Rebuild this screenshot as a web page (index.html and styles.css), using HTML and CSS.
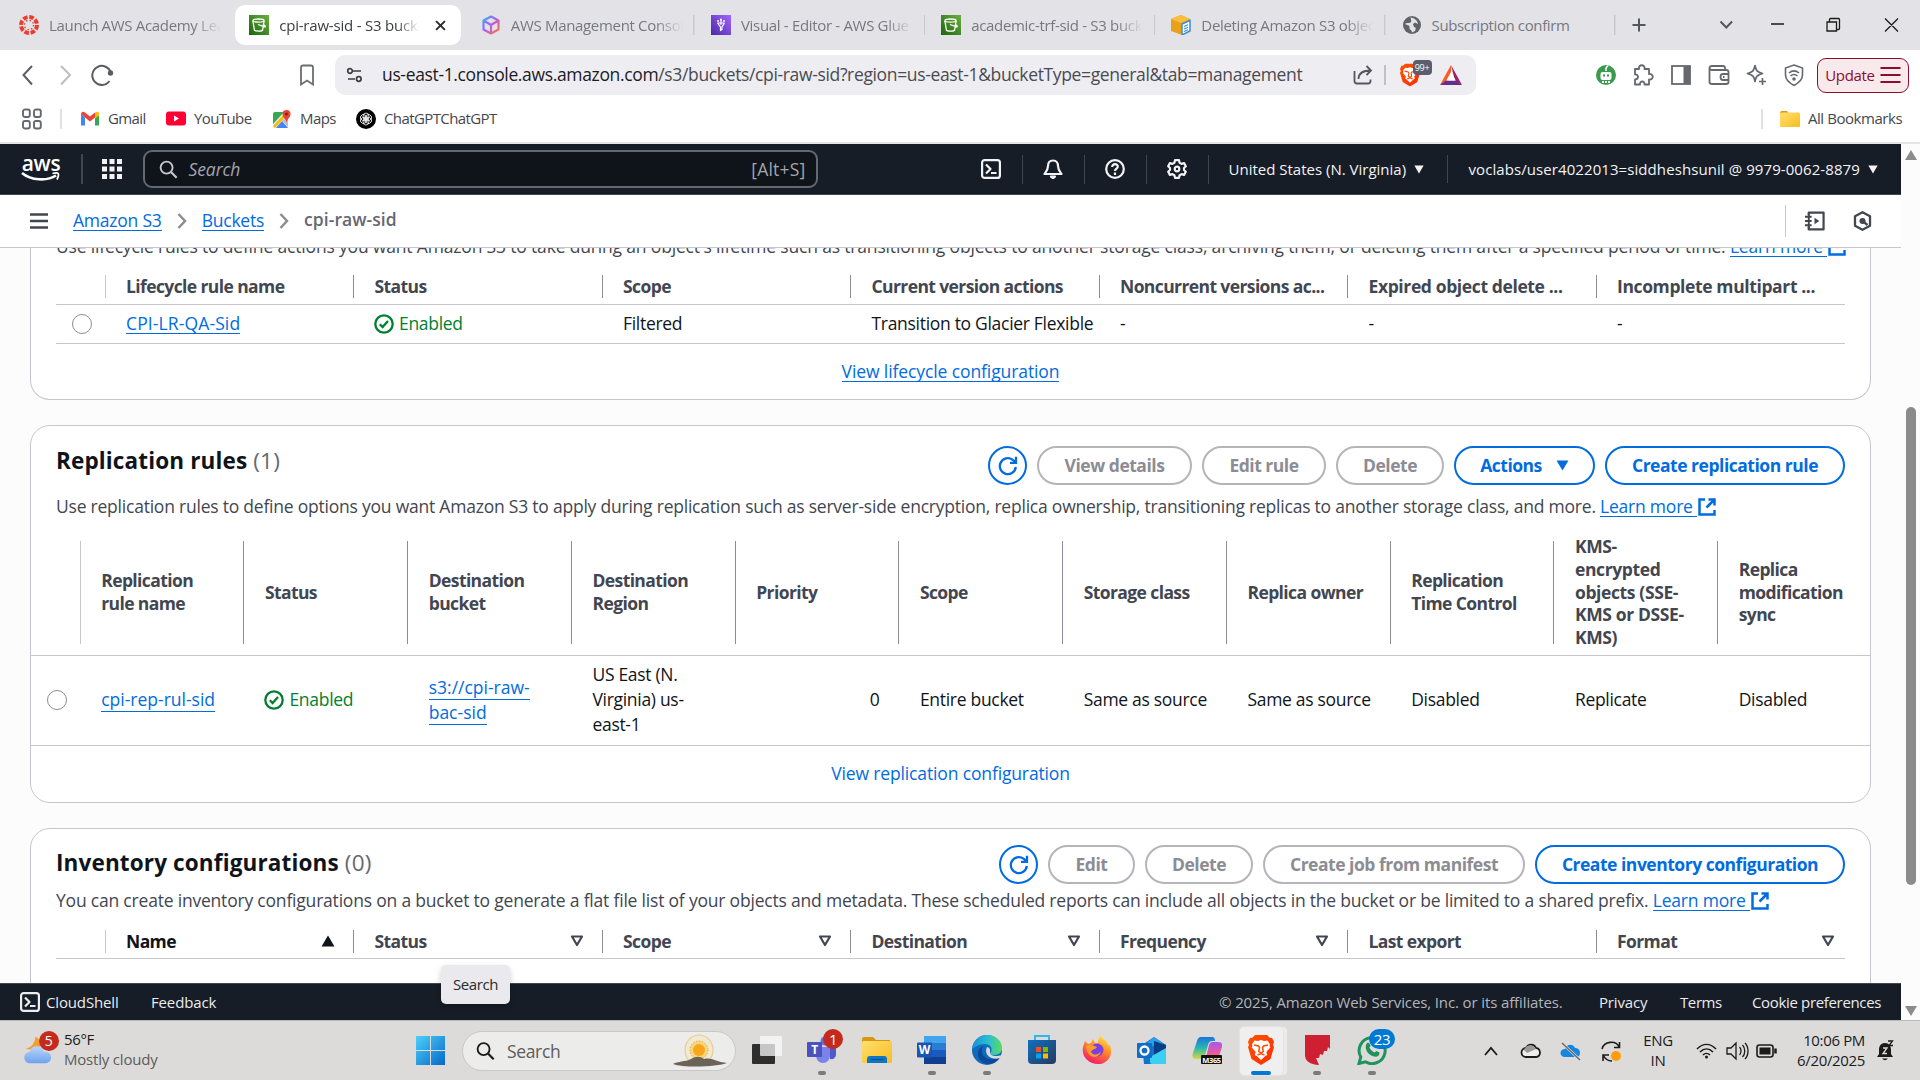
FILE: index.html
```html
<!DOCTYPE html>
<html lang="en">
<head>
<meta charset="utf-8">
<title>cpi-raw-sid - S3 bucket</title>
<link rel="stylesheet" href="styles.css">
</head>
<body>
<svg width="0" height="0" class="defs">
  <defs>
    <linearGradient id="gGreen" x1="0" y1="1" x2="1" y2="0"><stop offset="0" stop-color="#1b660f"/><stop offset="1" stop-color="#6cae3e"/></linearGradient>
    <linearGradient id="gPurple" x1="0" y1="1" x2="1" y2="0"><stop offset="0" stop-color="#4d27a8"/><stop offset="1" stop-color="#a166ff"/></linearGradient>
    <linearGradient id="gCube" x1="0" y1="0" x2="1" y2="1"><stop offset="0" stop-color="#2bb5f5"/><stop offset=".45" stop-color="#b05cf0"/><stop offset="1" stop-color="#ff7a3c"/></linearGradient>
    <linearGradient id="gWin" x1="0" y1="0" x2="1" y2="1"><stop offset="0" stop-color="#4fd0fb"/><stop offset="1" stop-color="#0468c8"/></linearGradient>
    <linearGradient id="gFolder" x1="0" y1="0" x2="1" y2="1"><stop offset="0" stop-color="#ffdf70"/><stop offset="1" stop-color="#f8bd1e"/></linearGradient>
    <linearGradient id="gCloud" x1="0" y1="0" x2="0" y2="1"><stop offset="0" stop-color="#b9d6fa"/><stop offset="1" stop-color="#6ea2ee"/></linearGradient>
    <linearGradient id="gEdge" x1="0" y1="0" x2="1" y2="0"><stop offset="0" stop-color="#1b8fd8"/><stop offset=".55" stop-color="#2bbfd0"/><stop offset="1" stop-color="#5fdc5c"/></linearGradient>
    <linearGradient id="gStore" x1="0" y1="0" x2="1" y2="1"><stop offset="0" stop-color="#0f71c0"/><stop offset="1" stop-color="#26395f"/></linearGradient>
    <linearGradient id="gFire" x1=".8" y1="0" x2=".3" y2="1"><stop offset="0" stop-color="#fff04a"/><stop offset=".45" stop-color="#ff8a2a"/><stop offset="1" stop-color="#f5156c"/></linearGradient>
    <linearGradient id="gBrave" x1="0" y1="0" x2="1" y2="1"><stop offset="0" stop-color="#ff5500"/><stop offset="1" stop-color="#ff2a00"/></linearGradient>
    <linearGradient id="gM1" x1="0" y1="0" x2="0" y2="1"><stop offset="0" stop-color="#1a74e0"/><stop offset=".5" stop-color="#29b7b0"/><stop offset="1" stop-color="#d8d83c"/></linearGradient>
    <linearGradient id="gM2" x1="0" y1="0" x2="0" y2="1"><stop offset="0" stop-color="#a558f0"/><stop offset=".6" stop-color="#ee5a9a"/><stop offset="1" stop-color="#ff8f55"/></linearGradient>
    <symbol id="s3" viewBox="0 0 20 20"><rect width="20" height="20" fill="url(#gGreen)"/><g fill="none" stroke="#fff" stroke-width="1.3"><ellipse cx="9.5" cy="5.6" rx="5.6" ry="1.6"/><path d="M3.9 5.8 5.4 15c.3 1.4 7.9 1.4 8.2 0l1.500-9.2M9 9.500l6.500 2.300c1.200.2 1-1-.7-1.900"/></g></symbol>
    <symbol id="brave" viewBox="0 0 26 30"><path d="M7 0h12l3 3 2-.3 2 4.300-1 3 1 2-3.500 12L13 30 3.500 24 0 12l1-2-1-3 2-4.300L4 3z" fill="url(#gBrave)"/><path d="m13 5 3 1 3.500-.5 2.500 4-.5 1.500.8 1.500-4 4.500 1 3-2 1-4.300 4-4.300-4-2-1 1-3-4-4.500.8-1.500L4 9.500l2.500-4L10 6z" fill="#fff"/><path d="m6 10 4.500 1 1 1.500-.7 4L13 18l2.200-1.500-.7-4 1-1.500 4.500-1M9.500 20l3.500-1.500 3.500 1.500" fill="none" stroke="#ff4a00" stroke-width="1.500"/></symbol>
    <symbol id="shell" viewBox="0 0 20 20"><g fill="none" stroke="currentColor" stroke-width="2.200" stroke-linejoin="round"><rect x="1.100" y="1.100" width="17.800" height="17.800" rx="2.500"/><path d="m5 5.500 4.500 4.500L5 14.500M10 14h5.500"/></g></symbol>
    <symbol id="mag" viewBox="0 0 20 20"><circle cx="8" cy="8" r="6.300" fill="none" stroke="currentColor" stroke-width="2"/><path d="m12.600 12.600 6 6" stroke="currentColor" stroke-width="2.300"/></symbol>
    <symbol id="ext" viewBox="0 0 18 18"><path d="M7 1.500H1.500v15h15V12M10.500 1.500h6v6M16 2 8.500 9.500" fill="none" stroke="currentColor" stroke-width="2.500"/></symbol>
    <symbol id="ok" viewBox="0 0 20 20"><circle cx="10" cy="10" r="8.700" fill="none" stroke="currentColor" stroke-width="2.300"/><path d="m5.800 10.200 2.800 2.800 5.400-6" fill="none" stroke="currentColor" stroke-width="2.300"/></symbol>
    <symbol id="refresh" viewBox="0 0 20 20"><path d="M17.800 11A8 8 0 1 1 14.500 3.600l2.800 2.200M18 .8v6h-6" fill="none" stroke="currentColor" stroke-width="2.300"/></symbol>
    <symbol id="down" viewBox="0 0 14 12"><path d="M.5.5h13L7 11.500z" fill="currentColor"/></symbol>
    <symbol id="sort" viewBox="0 0 14 12"><path d="M2 1.500h10L7 10z" fill="none" stroke="currentColor" stroke-width="2.200" stroke-linejoin="round"/></symbol>
    <symbol id="up" viewBox="0 0 14 12"><path d="M7 .5 13.500 11.500H.5z" fill="currentColor"/></symbol>
  </defs>
</svg>

<div class="tabs">
  <div class="tab"><svg class="fav" viewBox="0 0 20 20"><circle cx="10" cy="10" r="8" fill="none" stroke="#e83e30" stroke-width="4" stroke-dasharray="4.600 1.683"/><circle cx="10" cy="10" r="4.600" fill="none" stroke="#e83e30" stroke-width="1.400" stroke-dasharray="1.400 2.213"/></svg><span class="ttl">Launch AWS Academy Learner</span></div>
  <div class="tab on"><svg class="fav"><use href="#s3"/></svg><span class="ttl">cpi-raw-sid - S3 bucket</span><svg class="cls" viewBox="0 0 10 10"><path d="m1 1 8 8M9 1 1 9" stroke="#2c2d31" stroke-width="1.800"/></svg></div>
  <div class="tab sep"><svg class="fav" viewBox="0 0 20 20"><path d="m10 1.500 7.500 4v9L10 18.500l-7.500-4v-9zM2.500 5.500 10 10l7.500-4.500M10 10v8.500" fill="none" stroke="url(#gCube)" stroke-width="2.200" stroke-linejoin="round"/></svg><span class="ttl">AWS Management Console</span></div>
  <div class="tab sep"><svg class="fav" viewBox="0 0 20 20"><rect width="20" height="20" fill="url(#gPurple)"/><path d="m6.500 8 3 4v3.500l1.500-1V12l2.500-4M6.500 8h7M10 5v5" fill="none" stroke="#fff" stroke-width="1.200"/><g fill="#fff"><circle cx="7" cy="6" r="1"/><circle cx="10" cy="4.500" r="1"/><circle cx="13" cy="6" r="1"/></g></svg><span class="ttl">Visual - Editor - AWS Glue Studio</span></div>
  <div class="tab sep"><svg class="fav"><use href="#s3"/></svg><span class="ttl">academic-trf-sid - S3 bucket</span></div>
  <div class="tab sep"><svg class="fav" viewBox="0 0 20 20"><path d="M0 4 10 0l9 4v4l-8 3v9L0 16z" fill="#eba01b"/><path d="M0 4 10 0l9 4-9 4z" fill="#f9bf3c"/><path d="m11 9 8-3.500V16l-8 4z" fill="#fff" stroke="#3d8fd1" stroke-width="1.500"/><path d="m13 11.500 4-1.800M13 14l4-1.800M13 16.500l4-1.800" stroke="#3d8fd1" stroke-width="1.200"/></svg><span class="ttl">Deleting Amazon S3 objects</span></div>
  <div class="tab sep"><svg class="fav" viewBox="0 0 20 20"><circle cx="10" cy="10" r="9" fill="#5f6368"/><path d="M8.500 2.500c4 .5 7 3 7.500 6.500l-3-1.500-2 1.500 1 3c2 0 2 2 1 4l-3 1.500c0-2-1-2.500-2.500-3.500V11L3 9c1-1.500 4-.5 5.500-1.500s.5-2.500 0-5z" fill="#e3e2e7"/></svg><span class="ttl nofade">Subscription confirm</span></div>
  <svg class="winctl" viewBox="0 0 304 50" fill="none" stroke="#55565c" stroke-width="2"><path d="M16.500 25h13M23 18.500v13"/><path d="m104.500 21.500 5.800 6 5.800-6" /><g stroke="#1b1b1b" stroke-width="1.300"><path d="M155 24h13M211 22h9.500v9h-9.500zM213.500 22v-2.500c0-.6.4-1 1-1h8c.6 0 1 .4 1 1v9c0 .6-.4 1-1 1h-2M269 18.500l13 13M282 18.500l-13 13"/></g></svg>
</div>

<div class="toolbar">
  <svg class="nav" viewBox="0 0 120 50" fill="none" stroke="#5b5d63" stroke-width="2"><path d="M32 16 23.500 25l8.500 9.500"/><path d="m61 16 9 9-9 9.500" stroke="#bdbec3"/><path d="M111 23a9.500 9.500 0 1 0-1.500 8"/><circle cx="110.500" cy="23" r="2.700" fill="#5b5d63" stroke="none"/></svg>
  <svg class="bmk" viewBox="0 0 16 22"><path d="M2 20.500V3.500Q2 1.500 4 1.500h8q2 0 2 2v17l-6-4z" fill="none" stroke="#6b6d73" stroke-width="1.800"/></svg>
  <div class="omni">
    <svg class="tune" viewBox="0 0 16 16" fill="none" stroke="#3d3e43" stroke-width="1.700"><circle cx="3.500" cy="4" r="2.300"/><path d="M6.500 4h8M1.500 12h7"/><circle cx="12.300" cy="12" r="2.300"/></svg>
    <span class="url"><b>us-east-1.console.aws.amazon.com</b>/s3/buckets/cpi-raw-sid?region=us-east-1&amp;bucketType=general&amp;tab=management</span>
    <svg class="share" viewBox="0 0 20 20" fill="none" stroke="#55575d" stroke-width="1.800"><path d="M1.500 6v10q0 2.500 2.500 2.500h11q2.500 0 2.500-2.500v-1.500M5.500 14c0-6 5-8.500 12.500-8.500M13.500 1 18 5.500 13.500 10"/></svg>
    <i class="osep"></i>
    <span class="shield"><svg viewBox="0 0 26 30"><use href="#brave"/></svg><em>99+</em></span>
    <svg class="bat" viewBox="0 0 22 20"><path d="M11 0 0 20l11-6.500z" fill="#ff5a1f"/><path d="m11 0 11 20-7-4.500z" fill="#9e1f63"/><path d="M0 20h22l-6-4.500H6z" fill="#662d91"/><path d="m11 7 4.800 8.500H6.200z" fill="#fff"/></svg>
  </div>
  <div class="exts">
    <svg viewBox="0 0 22 22"><circle cx="11" cy="11" r="10" fill="#3b9a4c"/><path d="M11 7V4l2-2.500" stroke="#fff" stroke-width="1.500" fill="none"/><rect x="5.500" y="8" width="11" height="8" rx="2" fill="#fff"/><path d="M8 10.500h2v2H8zM12 10.500h2v2h-2z" fill="#3b9a4c"/><path d="M7 18h8" stroke="#fff" stroke-width="2" stroke-dasharray="2 1"/></svg>
    <svg viewBox="0 0 22 22" fill="none" stroke="#66686e" stroke-width="1.800"><path d="M3 5h4c-1-5 6.500-5 5.500 0H17v5c5-.500 5 6 0 5.500v5h-4.500c.5-4-5-4-4.500 0H3v-5c4 0 4-5.500 0-5z" stroke-linejoin="round"/></svg>
    <svg viewBox="0 0 22 22"><rect x="2" y="2" width="18" height="18" fill="none" stroke="#66686e" stroke-width="1.800"/><path d="M13.500 2H20v18h-6.500z" fill="#66686e"/></svg>
    <svg viewBox="0 0 22 22" fill="none" stroke="#66686e" stroke-width="1.800"><path d="M17 6V4q0-2-2-2H4Q1.500 2 1.500 4t2.500 2h14q2.500 0 2.500 2v10q0 2-2.500 2H4q-2.500 0-2.500-2V4M20.500 10H15q-2.500 0-2.500 3t2.500 3h5.500M15 13h1.500"/></svg>
    <svg viewBox="0 0 22 22" fill="none" stroke="#66686e" stroke-width="1.700" stroke-linejoin="round"><path d="M10 1.500c1 5 2 6.500 7.500 8-5.500 1.500-6.500 3-7.500 8-1-5-2-6.500-7.500-8 5.500-1.500 6.500-3 7.500-8zM17.500 14v7M14 17.500h7"/></svg>
    <svg viewBox="0 0 22 22" fill="none" stroke="#66686e" stroke-width="1.600"><path d="m11 1 8.500 3v7c0 5-4 8-8.500 10.500C6.500 19 2.500 16 2.500 11V4z"/><path d="M6 9c3-2.500 7-2.500 10 0M7.500 12c2-1.800 5-1.800 7 0"/><circle cx="11" cy="15" r="1" fill="#66686e"/></svg>
  </div>
  <div class="update"><span>Update</span><svg viewBox="0 0 20 18"><path d="M0 2h20M0 9h20M0 16h20" stroke="#8c0d2d" stroke-width="2"/></svg></div>
</div>

<div class="bookmarks">
  <svg class="apps" viewBox="0 0 20 22" fill="none" stroke="#66686e" stroke-width="1.900"><rect x="1" y="1.500" width="6.800" height="7.500" rx="2"/><rect x="12" y="1.500" width="6.800" height="7.500" rx="2"/><rect x="1" y="13" width="6.800" height="7.500" rx="2"/><rect x="12" y="13" width="6.800" height="7.500" rx="2"/></svg>
  <i class="bsep"></i>
  <span class="bm gm"><svg viewBox="0 0 18 14"><path d="M0 2v12h4V6z" fill="#4285f4"/><path d="M14 6v8h4V2z" fill="#34a853"/><path d="m0 2 4 4 5 4 5-4V1L9 5 4 1Q1-1 0 2z" fill="#ea4335"/><path d="M14 1q4-2 4 1v2l-4 3z" fill="#fbbc04"/></svg>Gmail</span>
  <span class="bm yt"><svg viewBox="0 0 20 14"><rect width="20" height="14" rx="3" fill="#f03"/><path d="m8 4 5 3-5 3z" fill="#fff"/></svg>YouTube</span>
  <span class="bm mp"><svg viewBox="0 0 20 20"><rect x="1" y="3" width="15" height="16" rx="2" fill="#e8eaed"/><path d="M1 5q0-2 2-2h9L1 15z" fill="#34a853"/><path d="M4 19 10 12l6 7z" fill="#4285f4"/><path d="M1 17 13 4l2 2L3 19z" fill="#fbbc04"/><path d="M10 11 16 18V9z" fill="#bdc1c6"/><path d="M14.500 14c0-4-4-5-4-9a4 4 0 0 1 8 0c0 4-4 5-4 9z" fill="#ea4335"/><circle cx="14.500" cy="5" r="1.500" fill="#8a1f14"/></svg>Maps</span>
  <span class="bm gp"><svg viewBox="0 0 20 20"><circle cx="10" cy="10" r="10" fill="#000"/><g fill="none" stroke="#fff" stroke-width=".8"><ellipse cx="10" cy="7.500" rx="3" ry="3.500"/><ellipse cx="10" cy="7.500" rx="3" ry="3.500" transform="rotate(60 10 10)"/><ellipse cx="10" cy="7.500" rx="3" ry="3.500" transform="rotate(120 10 10)"/><ellipse cx="10" cy="7.500" rx="3" ry="3.500" transform="rotate(180 10 10)"/><ellipse cx="10" cy="7.500" rx="3" ry="3.500" transform="rotate(240 10 10)"/><ellipse cx="10" cy="7.500" rx="3" ry="3.500" transform="rotate(300 10 10)"/></g></svg>ChatGPTChatGPT</span>
  <i class="bsep right"></i>
  <span class="bm all"><svg viewBox="0 0 20 16"><path d="M0 2Q0 0 2 0h5l2 2.500H0z" fill="#d99a10"/><rect y="1.500" width="20" height="14.500" rx="1.500" fill="url(#gFolder)"/></svg>All Bookmarks</span>
</div>

<div class="page">
  <div class="console">
    <header class="top">
      <span class="logo"><b>aws</b><svg viewBox="0 0 40 10"><path d="M1 1c9 7.500 25 8.500 34 2.500" fill="none" stroke="#fff" stroke-width="2.600"/><path d="M31.500 1.500c6-1.500 7.500-.5 4.500 6" fill="none" stroke="#fff" stroke-width="1.800"/></svg></span>
      <i class="hs"></i>
      <svg class="grid9" viewBox="0 0 20 20" fill="#f3f3f7"><path d="M0 0h5v5H0zM7.500 0h5v5h-5zM15 0h5v5h-5zM0 7.500h5v5H0zM7.500 7.500h5v5h-5zM15 7.500h5v5h-5zM0 15h5v5H0zM7.500 15h5v5h-5zM15 15h5v5h-5z"/></svg>
      <div class="search"><svg><use href="#mag"/></svg><em>Search</em><span>[Alt+S]</span></div>
      <div class="hic"><svg><use href="#shell"/></svg></div>
      <div class="hic"><svg viewBox="0 0 20 20" fill="none" stroke="currentColor" stroke-width="2.200" stroke-linejoin="round"><path d="M10 1.500c-3.500 0-5 2.500-5 5.500 0 4-1 5-3.500 8h17C16 12 15 11 15 7c0-3-1.500-5.500-5-5.500z"/><path d="M8 17.500h4l-2 1.500z"/></svg></div>
      <div class="hic"><svg viewBox="0 0 20 20" fill="none" stroke="currentColor" stroke-width="2.200"><circle cx="10" cy="10" r="8.800"/><path d="M7.200 8c0-4 5.800-3.500 5.600-.3C12.700 9.500 10 9.700 10 12M10 13.500V16"/></svg></div>
      <div class="hic"><svg viewBox="0 0 20 20" fill="none" stroke="currentColor" stroke-width="2.200" stroke-linejoin="round"><path d="M8 1.200h4l.6 2.600 2 1.100 2.500-.8 1.700 3.200L17 9v2l1.800 1.700-1.700 3.200-2.500-.8-2 1.100-.6 2.600H8l-.6-2.600-2-1.100-2.500.8-1.700-3.200L3 11V9L1.200 7.300l1.700-3.200 2.500.8 2-1.100z"/><circle cx="10" cy="10" r="2.300"/></svg></div>
      <div class="hreg">United States (N. Virginia)<svg><use href="#down"/></svg></div>
      <div class="husr">voclabs/user4022013=siddheshsunil @ 9979-0062-8879<svg><use href="#down"/></svg></div>
    </header>
    <nav class="crumbs">
      <svg class="burger" viewBox="0 0 18 16"><path d="M0 1.500h18M0 8h18M0 14.500h18" stroke="#424650" stroke-width="2.300"/></svg>
      <a>Amazon S3</a><svg class="cv" viewBox="0 0 10 16"><path d="m1.500 1 6.500 7-6.500 7" fill="none" stroke="#8c8c94" stroke-width="2.500"/></svg><a>Buckets</a><svg class="cv" viewBox="0 0 10 16"><path d="m1.500 1 6.500 7-6.500 7" fill="none" stroke="#8c8c94" stroke-width="2.500"/></svg><b>cpi-raw-sid</b>
      <div class="panels">
        <svg viewBox="0 0 22 20" fill="none" stroke="#424650" stroke-width="2.300"><path d="M5 4V1.200h15.500v17.600H5V16" stroke-linejoin="round"/><path d="M1 5.500h7M1 10h7M1 14.500h7M5 2v16" stroke-width="2"/><path d="m11 6.500 5 3.500-5 3.500z" fill="#424650" stroke="none"/></svg>
        <svg viewBox="0 0 20 20" fill="none" stroke="#424650" stroke-width="2.300" stroke-linejoin="round"><path d="m10 1.200 7.500 4v9.600l-7.500 4-7.500-4V5.200z"/><circle cx="10" cy="10" r="2.300" fill="#424650" stroke-width="1.500"/><path d="m10 10 5 4"/></svg>
      </div>
    </nav>
    <main>
      <section class="card first">
        <p class="desc d1">Use lifecycle rules to define actions you want Amazon S3 to take during an object's lifetime such as transitioning objects to another storage class, archiving them, or deleting them after a specified period of time. <a>Learn more </a><svg><use href="#ext"/></svg></p>
        <div class="row7 head h36"><i></i><span>Lifecycle rule name</span><span>Status</span><span>Scope</span><span>Current version actions</span><span>Noncurrent versions ac...</span><span class="wide">Expired object delete ...</span><span class="wide">Incomplete multipart ...</span></div>
        <div class="row7 data"><i><u class="radio"></u></i><span><a class="l1">CPI-LR-QA-Sid</a></span><span class="okk"><svg><use href="#ok"/></svg>Enabled</span><span>Filtered</span><span>Transition to Glacier Flexible</span><span>-</span><span>-</span><span>-</span></div>
        <div class="foot"><a>View lifecycle configuration</a></div>
      </section>

      <section class="card rep">
        <div class="hd"><h2>Replication rules <small>(1)</small></h2>
          <div class="btns"><button class="rf"><svg><use href="#refresh"/></svg></button><button class="dis w155">View details</button><button class="dis w124">Edit rule</button><button class="dis w108">Delete</button><button class="w141">Actions<svg><use href="#down"/></svg></button><button class="w240">Create replication rule</button></div></div>
        <p class="desc d2">Use replication rules to define options you want Amazon S3 to apply during replication such as server-side encryption, replica ownership, transitioning replicas to another storage class, and more. <a>Learn more </a><svg><use href="#ext"/></svg></p>
        <div class="row11 head"><i></i><span>Replication<br>rule name</span><span>Status</span><span>Destination<br>bucket</span><span>Destination<br>Region</span><span>Priority</span><span>Scope</span><span>Storage class</span><span>Replica owner</span><span>Replication<br>Time Control</span><span class="wide">KMS-<br>encrypted<br>objects (SSE-<br>KMS or DSSE-<br>KMS)</span><span>Replica<br>modification<br>sync</span></div>
        <div class="row11 data"><i><u class="radio"></u></i><span><a class="l2">cpi-rep-rul-sid</a></span><span class="okk"><svg><use href="#ok"/></svg>Enabled</span><span><a class="l2">s3://cpi-raw-<br>bac-sid</a></span><span>US East (N.<br>Virginia) us-<br>east-1</span><span class="num">0</span><span>Entire bucket</span><span>Same as source</span><span>Same as source</span><span>Disabled</span><span>Replicate</span><span>Disabled</span></div>
        <div class="foot plain"><a>View replication configuration</a></div>
      </section>

      <section class="card inv">
        <div class="hd"><h2>Inventory configurations <small>(0)</small></h2>
          <div class="btns"><button class="rf"><svg><use href="#refresh"/></svg></button><button class="dis w87">Edit</button><button class="dis w108">Delete</button><button class="dis w262">Create job from manifest</button><button class="w310">Create inventory configuration</button></div></div>
        <p class="desc d3">You can create inventory configurations on a bucket to generate a flat file list of your objects and metadata. These scheduled reports can include all objects in the bucket or be limited to a shared prefix. <a>Learn more </a><svg><use href="#ext"/></svg></p>
        <div class="row7 head h35"><i></i><span class="dark">Name<svg><use href="#up"/></svg></span><span>Status<svg><use href="#sort"/></svg></span><span>Scope<svg><use href="#sort"/></svg></span><span>Destination<svg><use href="#sort"/></svg></span><span>Frequency<svg><use href="#sort"/></svg></span><span>Last export</span><span class="last">Format<svg><use href="#sort"/></svg></span></div>
      </section>
    </main>
    <footer class="bot"><svg><use href="#shell"/></svg><span class="f1">CloudShell</span><span class="f2">Feedback</span><span class="f3">© 2025, Amazon Web Services, Inc. or its affiliates.</span><span class="f4">Privacy</span><span class="f5">Terms</span><span class="f6">Cookie preferences</span></footer>
  </div>
  <div class="scroll"><svg viewBox="0 0 12 10"><path d="M6 0 12 10H0z" fill="#8b8b8b"/></svg><div class="thumb"></div><svg viewBox="0 0 12 10"><path d="M0 0h12L6 10z" fill="#8b8b8b"/></svg></div>
</div>
<div class="tip">Search</div>

<div class="taskbar">
  <div class="weather"><svg viewBox="0 0 36 36"><path d="M13 4c6 3 7 10 3 15L1 18c6-1 11-5 12-14z" fill="#f0a02c"/><path d="M7 34a6.500 6.500 0 0 1-.5-13c1-4 4-6 7.500-6 4 0 7 2 8 6h2a6.500 6.500 0 0 1 0 13z" fill="url(#gCloud)"/></svg><em>5</em><div>56°F<br><span>Mostly cloudy</span></div></div>
  <svg class="win" viewBox="0 0 29 29" fill="url(#gWin)"><path d="M0 0h14v14H0zM15 0h14v14H15zM0 15h14v14H0zM15 15h14v14H15z"/></svg>
  <div class="tsearch"><svg class="m"><use href="#mag"/></svg><span>Search</span><svg class="sun" viewBox="0 0 56 34"><ellipse cx="27" cy="16" rx="14" ry="15" fill="#f1e9d3" stroke="#e6cd90" stroke-width="1.200"/><circle cx="27" cy="16" r="9" fill="#f8d77c" stroke="#eda62c" stroke-dasharray="1.500 1.500"/><circle cx="27" cy="16" r="6" fill="#f6a71c"/><path d="M1 30c5-3 12-2 18-5 5-3 9-3 13 0 8-2 12 3 23 4-9 4-44 5-54 1z" fill="#6b6358"/></svg></div>
  <div class="apps2">
    <div><svg viewBox="0 0 30 30"><rect x="0" y="9" width="23" height="20" rx="1" fill="#2e2e2e"/><rect x="8" y="1" width="22" height="20" rx="1" fill="#fafafa" opacity=".75"/></svg></div>
    <div class="run"><svg viewBox="0 0 30 30"><circle cx="18" cy="6" r="4.500" fill="#6a70dc"/><circle cx="26" cy="9" r="3" fill="#4d55bd"/><path d="M21 12h8v8q-1 5-6 4z" fill="#5059c9"/><path d="M9 12h14v9q-1 7-7 7t-7-7z" fill="#7b83eb"/><rect x="0" y="7" width="15" height="15" rx="1" fill="#4a52bb"/><text x="7.500" y="19" text-anchor="middle" font-size="12" font-weight="700" fill="#fff">T</text></svg><em class="red">1</em></div>
    <div><svg viewBox="0 0 30 30"><path d="M0 4q0-2 2-2h9l3 3h14v5H0z" fill="#d9960f"/><rect y="6" width="30" height="22" rx="1.500" fill="url(#gFolder)"/><path d="M5 28v-4q0-3 3-3h14q3 0 3 3v4z" fill="#0f76c4"/><path d="M9 24.500h12" stroke="#0b4f88"/></svg></div>
    <div class="run"><svg viewBox="0 0 30 30"><path d="M7 1h22v7H7z" fill="#41a5ee"/><path d="M7 8h22v7H7z" fill="#2b7cd3"/><path d="M7 15h22v7H7z" fill="#185abd"/><path d="M7 22h22v7H7z" fill="#103f91"/><rect y="7.500" width="15" height="15" rx="1" fill="#1a55b3"/><text x="7.500" y="19" text-anchor="middle" font-size="12" font-weight="700" fill="#fff">W</text></svg></div>
    <div class="run"><svg viewBox="0 0 30 30"><circle cx="15" cy="15" r="15" fill="#0f6cbd"/><path d="M0 14C1 5 8 0 15 0c9 0 15 6 15 13 0 5-4 7-8 7-3 0-5-1-3-3 2-4-1-8-6-8-6 0-10 3-13 5z" fill="url(#gEdge)"/><path d="M12 11c-4 3-3 14 9 13 3 0 5-1 7-2-5 9-19 10-22-1-1-5 2-9 6-10z" fill="#0b4a9a"/><path d="M15 12c4 1 3 4 3 6 1 3 5 4 12 2l-2 3c-8 3-17-3-13-11z" fill="#dcdbda"/></svg></div>
    <div><svg viewBox="0 0 30 30"><path d="M8 5V1h14v4" fill="none" stroke="#2fb7ee" stroke-width="2"/><path d="M1 5h28v20q0 4-4 4H5q-4 0-4-4z" fill="url(#gStore)"/><path d="M9 12h5v5H9z" fill="#f25022"/><path d="M16 12h5v5h-5z" fill="#7fba00"/><path d="M9 18.500h5v5H9z" fill="#00a4ef"/><path d="M16 18.500h5v5h-5z" fill="#ffb900"/></svg></div>
    <div><svg viewBox="0 0 30 30"><path d="M3 6 6 9l3-1 2-4 2 4 3 0c0-4 1-6 3-8 1 4 4 5 6 7l1 3 2 0c4 11-3 19-12 19S-1 22 1 12z" fill="url(#gFire)"/><circle cx="15" cy="15" r="6.500" fill="#7a3fe0"/><path d="M4 11c4-3 8 0 11 1-2 3-5 2-6 5 3 4 8 3 10-1-1 8-14 9-15-5z" fill="#ff9a2e"/></svg></div>
    <div><svg viewBox="0 0 30 30"><path d="M5 10 17 2l12 8v17q0 2-2 2H7z" fill="#1274c8"/><path d="M9 9 17 2l12 8v4z" fill="#2aa0e8"/><path d="m17 6 12 4v4L17 22z" fill="#0a3d84"/><path d="m29 13-16 9v5q0 2 2 2h12q2 0 2-2z" fill="#3ccff4"/><rect y="8" width="15" height="15" rx="1" fill="#0f6cc8"/><circle cx="7.500" cy="15.500" r="4" fill="none" stroke="#fff" stroke-width="2.300"/></svg></div>
    <div><svg viewBox="0 0 30 30"><path d="M9 2h11q3 0 3 4l-3 0q-3 0-4 4l-3 10q-1 4-5 4H4q-5 0-3-6L5 6q1-4 4-4z" fill="url(#gM1)"/><path d="M20 7h6q5 0 4 5l-3 9q-1 5-6 5H10q3-1 4-4l3-12q1-3 3-3z" fill="url(#gM2)"/><rect x="9" y="20" width="21" height="9" rx="1" fill="#111"/><text x="19.500" y="27.500" text-anchor="middle" font-size="7.500" font-weight="700" fill="#fff">M365</text></svg></div>
    <div class="act"><svg viewBox="0 0 26 30"><use href="#brave"/></svg></div>
    <div class="run"><svg viewBox="0 0 30 30"><path d="M3 0h25v14l-2-2-1 4-3 0-1 4-3-1-1 4-3 0 3 7Q3 29 3 20z" fill="#cf2031"/></svg></div>
    <div class="run"><svg viewBox="0 0 30 30"><path d="M2 28.500 3.800 22A13 13 0 1 1 8.500 26.800z" fill="none" stroke="#20935c" stroke-width="3"/><path d="M10 8c2-1 3 1 3.500 3l-1 1.500c1 2.500 3 4 5 5l2-1.500 3 1.500c0 5-5 5-9 2.500S7 12 10 8z" fill="#20935c"/></svg><em class="blue">23</em></div>
  </div>
  <svg class="tray" viewBox="0 0 160 40" fill="none" stroke="#1b1b1b" stroke-width="1.800">
    <path d="m5 24 6-7 6 7"/>
    <path d="M46 26a4.500 4.500 0 0 1 0-9c2-4 8-5 10 0 5 0 5.500 9 0 9z" fill="#eee"/><path d="M44 19c2-5 8-7 12-1l-9 4z" fill="#999" stroke="none"/>
    <path d="M85 26c-6 0-6-8 0-8 2-6 9-5 10-1 6-1 7 9 1 9z" fill="#1587e0" stroke="none"/><path d="m82 12 18 17" stroke="#dcdbda" stroke-width="2.500"/><path d="m82 12 18 17" stroke="#666" stroke-width="1.300"/>
    <path d="M122 18c2-8 14-9 17-2M139.500 11v5.500H134M123 30v-6h6M123 24c2 4 5 6 9 6" stroke-width="1.600"/><circle cx="136" cy="25" r="5" fill="#ff9c0a" stroke="none"/>
  </svg>
  <div class="lang">ENG<br>IN</div>
  <svg class="tray2" viewBox="0 0 90 40" fill="none" stroke="#1b1b1b" stroke-width="1.600">
    <path d="M6 18c6-6 13-6 19 0M9 21c4-4 9-4 13 0M12 24c2-2 5-2 7 0"/><circle cx="15.500" cy="26" r="1.500" fill="#1b1b1b" stroke="none"/>
    <path d="M36 17h4l5-5v16l-5-5h-4zM48.500 16c2 2 2 6 0 8M51.500 14c3 3 3 9 0 12M54 12c4 4 4 12 0 16" stroke-width="1.300"/>
    <rect x="66" y="14" width="16" height="12" rx="2.500"/><rect x="68.500" y="16.500" width="11" height="7" fill="#1b1b1b" stroke="none"/><path d="M84.500 17.500v5" stroke-width="2.500"/>
  </svg>
  <div class="clock">10:06 PM<br>6/20/2025</div>
  <svg class="bell" viewBox="0 0 18 22"><path d="M9 3c-5 0-6 4-6 7v4l-2 3h16l-2-3V10c0-4-2-7-6-7zM6 18.500h6q-3 3.500-6 0z" fill="#1b1b1b"/><path d="M12 1h4.500L13 5.500h4" fill="none" stroke="#1b1b1b" stroke-width="1.300"/><path d="M7 8h4L7 13.500h4" fill="none" stroke="#dcdbda" stroke-width="1.300"/></svg>
</div>
</body>
</html>
```
FILE: styles.css
```css
*{box-sizing:border-box;margin:0;padding:0}
body{width:1920px;height:1080px;overflow:hidden;font-family:"Open Sans","Noto Sans",sans-serif;font-size:17.5px;line-height:25px;color:#0f141a;background:#fff;display:flex;flex-direction:column}
svg{display:block;flex:none}
.defs{position:absolute}
text{font-family:"Open Sans",sans-serif}
em,i{font-style:normal}
u{text-decoration:none}

/* browser tabs */
.tabs{height:50px;background:#e3e2e7;display:flex;align-items:center;padding-left:5px;font-size:15px;letter-spacing:-.32px;color:#77787d;flex:none}
.tab{width:230.2px;height:40px;display:flex;align-items:center;padding-left:14px;flex:none}
.tab.on{background:#fff;border-radius:10px;width:226px;margin-right:3.600px;color:#3b3c40}
.tab.sep{padding-left:16px;background:linear-gradient(#c9c9ce,#c9c9ce) right center/1.500px 20px no-repeat}
.fav{width:20px;height:20px;margin-right:10px}
.ttl{width:172px;overflow:hidden;white-space:nowrap;-webkit-mask-image:linear-gradient(90deg,#000 84%,transparent);mask-image:linear-gradient(90deg,#000 84%,transparent)}
.on .ttl{width:140px;margin-right:16px;letter-spacing:-.2px}
.ttl.nofade{-webkit-mask-image:none;mask-image:none;letter-spacing:-.38px}
.cls{width:11px;height:11px}
.winctl{width:304px;height:50px}

/* address row */
.toolbar{height:50px;display:flex;align-items:center;flex:none}
.nav{width:120px;height:50px}
.bmk{width:16px;height:22px;margin:0 20px 0 179px}
.omni{width:1141px;height:40px;background:#eeedf2;border-radius:10px;display:flex;align-items:center;padding-left:11px}
.tune{width:17px;height:16px;margin-right:19px}
.url{width:971px;white-space:nowrap;letter-spacing:-.35px;color:#4a4b50;margin-top:-1px}
.url b{font-weight:400;color:#1b1b1f}
.share{width:20px;height:20px}
.osep{width:1.500px;height:20px;background:#c0c0c6;margin:0 14px 0 11px}
.shield{position:relative;width:20px;height:24px;margin-right:20px}
.shield svg{width:20px;height:24px}
.shield em{position:absolute;left:13px;top:-3px;width:19px;height:15px;border-radius:4px;background:#5c5e6b;color:#fff;font-size:9px;line-height:15px;text-align:center;letter-spacing:-.3px}
.bat{width:22px;height:20px}
.exts{display:flex;margin-left:111px}
.exts svg{width:22px;height:22px;margin:0 7.800px}
.update{width:92px;height:35px;margin-left:4.400px;border:1.500px solid #8c0d2d;border-radius:9px;background:#f7e9ec;color:#8c0d2d;font-size:15px;letter-spacing:-.3px;display:flex;align-items:center;justify-content:center;gap:5px}
.update svg{width:21px;height:18px}

.bookmarks{height:44px;border-bottom:2px solid #e3e3e8;padding-bottom:5px;display:flex;align-items:center;font-size:15px;letter-spacing:-.6px;color:#46474c;flex:none}
.apps{width:20px;height:22px;margin-left:22px}
.bsep{width:2px;height:20px;background:#e0e0e5;margin-left:18px}
.bm{display:flex;align-items:center;white-space:nowrap}
.bm svg{margin-right:8px;width:20px;height:20px}
.gm{margin-left:19px;width:85px}.bm.gm svg{width:18px;height:15px;margin-right:9px}
.yt{width:106px}.bm.yt svg{height:15px}
.mp{width:84px}
.bsep.right{margin-left:auto}
.all{margin-left:17px;width:140px;letter-spacing:-.45px}

/* console */
.page{height:876px;display:flex;flex:none}
.console{width:1901px;display:flex;flex-direction:column}
.scroll{width:19px;background:#fcfcfc;display:flex;flex-direction:column;align-items:center;padding:6px 0 4px}
.scroll svg{width:12px;height:10px}
.thumb{width:10px;height:478px;border-radius:5px;background:#8b8b8b;margin:247px 0 auto}
.top{height:51px;background:#161d26;border-bottom:1px solid #424650;display:flex;align-items:center;color:#f3f3f7;font-size:15px;font-weight:500;flex:none}
.logo{width:40px;height:28px;margin-left:21px;margin-top:-1px}
.logo b{display:block;font-size:21px;line-height:16px;height:17px;font-weight:600;text-align:center;color:#fff;letter-spacing:-.3px}
.logo svg{width:40px;height:10px}
.hs{width:1.500px;height:30px;background:#424650;margin:0 19px 0 20px}
.grid9{width:20px;height:20px;margin-right:21px}
.search{width:675px;height:38px;border:2px solid #656871;border-radius:9px;background:#0f141a;display:flex;align-items:center;padding:0 10px 0 14px;color:#a4a4ad;font-size:17.5px;font-weight:400}
.search svg{width:19px;height:19px;color:#c6c6cd;margin-right:11px}
.search em{font-style:italic;letter-spacing:-.1px}
.search span{margin-left:auto;letter-spacing:.2px}
.hic{width:62px;height:29px;border-right:1.500px solid #424650;display:flex;justify-content:center;align-items:center}
.search+.hic{margin-left:143px}
.hic svg{width:20px;height:20px}
.hreg,.husr{display:flex;align-items:center;white-space:nowrap}
.hreg{width:239px;height:28px;border-right:1px solid #424650;padding-left:20px}
.husr{padding-left:21px;letter-spacing:.08px}
.hreg svg,.husr svg{width:10px;height:9px;margin-left:8px}
.crumbs{height:53px;border-bottom:1px solid #c6c6cd;display:flex;align-items:center;padding:0 0 1px 30px;letter-spacing:-.22px;flex:none}
.burger{width:18px;height:16px;margin-right:25px}
a{color:#006ce0;border-bottom:1.250px solid #006ce0;display:inline-block;line-height:20px;white-space:pre}
.crumbs a{margin-top:-1px}
.cv{width:10px;height:16px;margin:0 15px}
.crumbs b{font-weight:600;color:#656871;letter-spacing:.05px;margin-top:-2px}
.panels{margin-left:auto;width:116px;height:32px;border-left:1px solid #c6c6cd;display:flex;align-items:center;gap:27px;padding-left:18px}
.panels svg{width:21px;height:20px}

main{height:735px;background:#fcfcfc;overflow:hidden;padding:0 30px}
.card{border:1px solid #c6c6cd;border-radius:20px;background:#fff;padding:0 25px;width:1841px;height:378px;margin-top:25px}
.card.first{height:166px;margin-top:-14px;border-top:0;border-radius:0 0 20px 20px}
.card.rep{padding:0}
.card.inv{height:300px}
.desc{height:25px;white-space:pre;display:flex;align-items:center;color:#424650}
.d1{letter-spacing:-.172px}.d2{letter-spacing:-.222px}.d3{letter-spacing:-.2px}
.desc svg{width:18px;height:18px;color:#006ce0;margin-left:1px}
.hd{display:flex;justify-content:space-between}
.rep .hd{padding:20px 25px 0}
.inv .hd{padding-top:16px}
.inv h2{margin-top:3px}
.rep .desc{margin:9px 25px 0}
.inv .desc{margin-top:4px}
h2{font-size:22.500px;line-height:30px;font-weight:700;letter-spacing:.14px}
h2 small{font-size:22.500px;font-weight:400;color:#656871;letter-spacing:.3px}
.btns{display:flex;gap:10px}
button{height:39px;border:2px solid #006ce0;border-radius:20px;background:#fff;color:#006ce0;font:700 17.500px "Open Sans","Noto Sans",sans-serif;letter-spacing:-.48px;white-space:nowrap;display:flex;align-items:center;justify-content:center;padding-bottom:2px}
button.dis{border-color:#b4b4bb;color:#8c8c94}
button.rf{width:39px;padding-bottom:0}
.rf svg{width:20px;height:20px}
.w155{width:155px}.w124{width:124px}.w108{width:108px}.w141{width:141px}.w240{width:240px}.w87{width:87px}.w262{width:262px}.w310{width:310px}
.w141 svg{width:13px;height:11px;margin:2px 0 0 14px}

.row7,.row11{display:grid;border-bottom:1px solid #c6c6cd;align-items:center}
.row7{grid-template-columns:48.500px repeat(6,248.500px) 1fr}
.row11{grid-template-columns:48.700px repeat(10,163.750px) 1fr}
.head{font-weight:700;color:#424650;line-height:22.700px;letter-spacing:-.6px}
.head span{display:flex;align-items:center;border-left:1.500px solid #8c8c94;padding-left:20.500px;height:23px;white-space:nowrap}
.head .wide{letter-spacing:-.38px}
.head i+span{border-left-color:#c6c6cd}
.h36{height:36px;margin-top:10px}
.h36 span{padding-bottom:1px}
.h35{height:35px;margin-top:11px}
.row11.head{height:127px;margin-top:10px}
.row11.head span{height:103px}
.head svg{width:14px;height:12px;margin-left:auto;margin-right:18px}
.head .last svg{margin-right:10px}
.dark{color:#0f141a}
.data span{padding-left:21.500px;white-space:nowrap;letter-spacing:-.3px}
.row7.data{height:39px;padding-bottom:1px}
.row11.data{height:90px;padding-bottom:2px}
.row11.data a{display:inline;line-height:25px}
.data .l1{letter-spacing:.12px}
.data .l2{letter-spacing:0}
.radio{display:block;width:20px;height:20px;border:1.500px solid #8c8c94;border-radius:50%;margin:1px 0 0 16px}
.data .okk{display:flex;align-items:center;color:#00802f;padding-left:21px}
.okk svg{width:20px;height:20px;margin:1px 5px 0 0}
.data .num{text-align:right;padding-right:19px}
.foot{height:54px;display:flex;justify-content:center;align-items:center;letter-spacing:-.1px}
.plain{padding-bottom:1px;letter-spacing:-.14px}
.plain a{border:0}

.bot{height:37px;background:#161d26;border-top:1px solid #424650;color:#ebebf0;font-size:15px;letter-spacing:-.15px;display:flex;align-items:center;white-space:nowrap;flex:none}
.bot svg{width:20px;height:20px;margin:0 6px 0 20px}
.f1{width:105px}.f2{width:1068px}.f3{width:380px;color:#b4b4bb;letter-spacing:-.12px}.f4{width:81px}.f5{width:72px;letter-spacing:-.4px}.f6{letter-spacing:-.34px}

.tip{position:absolute;left:441px;top:965px;width:69px;height:39px;background:#e9e9ee;border-radius:5px;box-shadow:0 3px 6px rgba(0,0,0,.2);text-align:center;line-height:38px;font-size:15px;letter-spacing:-.4px;color:#2b2b2b}

/* taskbar */
.taskbar{height:60px;border-top:1px solid #b9b8b8;background:#dcdbda;display:flex;align-items:center;font-size:15px;line-height:20px;letter-spacing:-.35px;color:#1b1b1b;flex:none}
.weather{position:relative;width:416px;padding-left:24px;display:flex;align-items:center}
.weather svg{width:32px;height:36px;margin-right:8px;margin-top:-4px}
.weather em{position:absolute;left:38.500px;top:-2px;width:20px;height:20px;border-radius:50%;background:#c42b1c;color:#fff;text-align:center;line-height:20px;font-size:14px}
.weather span{color:#5c5c5c;letter-spacing:-.2px}
.weather div{margin-top:-4px;white-space:nowrap}
.win{width:29px;height:29px}
.tsearch{width:274px;height:40px;margin-left:17px;border-radius:20px;background:#ececeb;border:1px solid #c9c8c8;display:flex;align-items:center;padding:0 7px 0 13px;font-size:17.500px;color:#5c5c5c}
.tsearch .m{width:19px;height:20px;color:#1b1b1b;margin-right:12px}
.sun{width:56px;height:34px;margin-left:auto}
.apps2{display:flex;margin-left:3px}
.apps2>div{width:55px;height:59px;display:flex;align-items:center;justify-content:center;position:relative;padding-bottom:1px}
.apps2 svg{width:30px;height:30px}
.apps2 em{position:absolute;top:8px;height:20px;border-radius:10px;color:#fff;text-align:center;line-height:20px}
.red{left:29px;width:20px;background:#c42b1c}
.blue{left:25px;width:26px;background:#0078d4}
.run::after,.act::after{content:"";position:absolute;left:23.500px;bottom:5px;width:8px;height:4px;border-radius:2px;background:#7b7a7a}
.act::before{content:"";position:absolute;left:5px;top:5px;width:43px;height:48px;border-radius:5px;background:#f0efef;border:1px solid #e4e3e3;box-shadow:4px 0 0 -1px #eceaea}
.apps2 .act svg{position:relative;width:26px;left:-1px}
.act::after{left:17px;width:20px;background:#0078d4}
.tray{width:160px;height:40px;margin-left:81px}
.lang{width:56px;text-align:center;margin:-2px 10px 0 -10px}
.tray2{width:90px;height:40px;margin-left:-5px}
.clock{margin:-2px 0 0 auto;text-align:right;white-space:nowrap}
.bell{width:18px;height:22px;margin:0 26px 0 11px}
```
